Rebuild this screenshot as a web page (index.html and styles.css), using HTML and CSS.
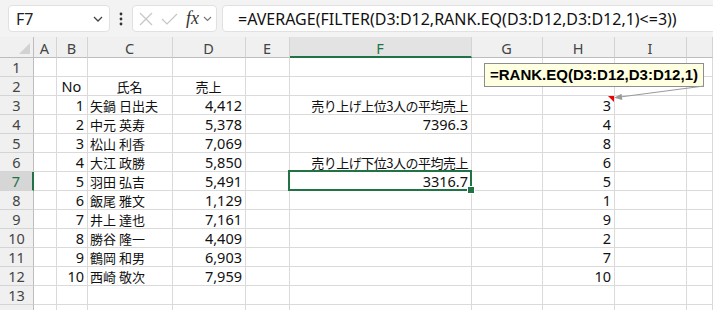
FILE: index.html
```html
<!DOCTYPE html>
<html lang="ja">
<head>
<meta charset="utf-8">
<title>Excel</title>
<link rel="stylesheet" href="styles.css">
</head>
<body>
<div class="app">
  <div class="fbar">
    <div class="namebox">
      <span class="nb-text">F7</span>
      <svg class="nb-chev" width="10" height="6" viewBox="0 0 10 6"><path d="M1 1 L5 5 L9 1" fill="none" stroke="#444" stroke-width="1.3"/></svg>
    </div>
    <div class="dots">
      <svg width="4" height="14" viewBox="0 0 4 14"><circle cx="2" cy="2" r="1.4" fill="#333"/><circle cx="2" cy="7" r="1.4" fill="#333"/><circle cx="2" cy="12" r="1.4" fill="#333"/></svg>
    </div>
    <div class="iconbox">
      <svg class="ico-x" width="14" height="14" viewBox="0 0 14 14"><path d="M1 1 L13 13 M13 1 L1 13" stroke="#c6c6c6" stroke-width="1.2" fill="none"/></svg>
      <svg class="ico-ok" width="17" height="12" viewBox="0 0 17 12"><path d="M1 6 L6 11 L16 1" stroke="#c6c6c6" stroke-width="1.2" fill="none"/></svg>
      <span class="fx">fx</span>
      <svg class="ico-chev" width="9" height="6" viewBox="0 0 9 6"><path d="M1 1 L4.5 4.5 L8 1" fill="none" stroke="#777" stroke-width="1.1"/></svg>
    </div>
    <div class="formula">=AVERAGE(FILTER(D3:D12,RANK.EQ(D3:D12,D3:D12,1)&lt;=3))</div>
  </div>

  <div class="sheet">
    <!-- header -->
    <div class="c corner"><svg width="11" height="11" viewBox="0 0 11 11"><path d="M11 0 L11 11 L0 11 Z" fill="#d2d2d2"/></svg></div>
    <div class="c ch">A</div><div class="c ch">B</div><div class="c ch">C</div><div class="c ch">D</div><div class="c ch">E</div><div class="c ch chsel">F</div><div class="c ch">G</div><div class="c ch">H</div><div class="c ch">I</div><div class="c ch"></div>

    <!-- row 1 -->
    <div class="c rh">1</div><div class="c"></div><div class="c"></div><div class="c"></div><div class="c"></div><div class="c"></div><div class="c"></div><div class="c"></div><div class="c"></div><div class="c"></div><div class="c"></div>
    <!-- row 2 -->
    <div class="c rh">2</div><div class="c"></div><div class="c ctr">No</div><div class="c ctr"><span class="jp">氏名</span></div><div class="c ctr"><span class="jp">売上</span></div><div class="c"></div><div class="c"></div><div class="c"></div><div class="c"></div><div class="c"></div><div class="c"></div>
    <!-- row 3 -->
    <div class="c rh">3</div><div class="c"></div><div class="c r">1</div><div class="c"><span class="jp">矢鍋 日出夫</span></div><div class="c r">4,412</div><div class="c"></div><div class="c r"><span class="jp lbl">売り上げ上位3人の平均売上</span></div><div class="c"></div><div class="c r note">3</div><div class="c"></div><div class="c"></div>
    <!-- row 4 -->
    <div class="c rh">4</div><div class="c"></div><div class="c r">2</div><div class="c"><span class="jp">中元 英寿</span></div><div class="c r">5,378</div><div class="c"></div><div class="c r">7396.3</div><div class="c"></div><div class="c r">4</div><div class="c"></div><div class="c"></div>
    <!-- row 5 -->
    <div class="c rh">5</div><div class="c"></div><div class="c r">3</div><div class="c"><span class="jp">松山 利香</span></div><div class="c r">7,069</div><div class="c"></div><div class="c"></div><div class="c"></div><div class="c r">8</div><div class="c"></div><div class="c"></div>
    <!-- row 6 -->
    <div class="c rh">6</div><div class="c"></div><div class="c r">4</div><div class="c"><span class="jp">大江 政勝</span></div><div class="c r">5,850</div><div class="c"></div><div class="c r"><span class="jp lbl">売り上げ下位3人の平均売上</span></div><div class="c"></div><div class="c r">6</div><div class="c"></div><div class="c"></div>
    <!-- row 7 -->
    <div class="c rh rhsel">7</div><div class="c"></div><div class="c r">5</div><div class="c"><span class="jp">羽田 弘吉</span></div><div class="c r">5,491</div><div class="c"></div><div class="c r sel">3316.7</div><div class="c"></div><div class="c r">5</div><div class="c"></div><div class="c"></div>
    <!-- row 8 -->
    <div class="c rh">8</div><div class="c"></div><div class="c r">6</div><div class="c"><span class="jp">飯尾 雅文</span></div><div class="c r">1,129</div><div class="c"></div><div class="c"></div><div class="c"></div><div class="c r">1</div><div class="c"></div><div class="c"></div>
    <!-- row 9 -->
    <div class="c rh">9</div><div class="c"></div><div class="c r">7</div><div class="c"><span class="jp">井上 達也</span></div><div class="c r">7,161</div><div class="c"></div><div class="c"></div><div class="c"></div><div class="c r">9</div><div class="c"></div><div class="c"></div>
    <!-- row 10 -->
    <div class="c rh">10</div><div class="c"></div><div class="c r">8</div><div class="c"><span class="jp">勝谷 隆一</span></div><div class="c r">4,409</div><div class="c"></div><div class="c"></div><div class="c"></div><div class="c r">2</div><div class="c"></div><div class="c"></div>
    <!-- row 11 -->
    <div class="c rh">11</div><div class="c"></div><div class="c r">9</div><div class="c"><span class="jp">鶴岡 和男</span></div><div class="c r">6,903</div><div class="c"></div><div class="c"></div><div class="c"></div><div class="c r">7</div><div class="c"></div><div class="c"></div>
    <!-- row 12 -->
    <div class="c rh">12</div><div class="c"></div><div class="c r">10</div><div class="c"><span class="jp">西崎 敬次</span></div><div class="c r">7,959</div><div class="c"></div><div class="c"></div><div class="c"></div><div class="c r">10</div><div class="c"></div><div class="c"></div>
    <!-- row 13 -->
    <div class="c rh">13</div><div class="c"></div><div class="c"></div><div class="c"></div><div class="c"></div><div class="c"></div><div class="c"></div><div class="c"></div><div class="c"></div><div class="c"></div><div class="c"></div>
    <!-- row 14 (partially visible) -->
    <div class="c rh"></div><div class="c"></div><div class="c"></div><div class="c"></div><div class="c"></div><div class="c"></div><div class="c"></div><div class="c"></div><div class="c"></div><div class="c"></div><div class="c"></div>
  </div>

  <div class="comment">=RANK.EQ(D3:D12,D3:D12,1)</div>
  <svg class="arrow" width="713" height="310" viewBox="0 0 713 310">
    <line x1="704" y1="86" x2="620" y2="97" stroke="#9a9a9a" stroke-width="1"/>
    <polygon points="614,97.8 622.3,100 621.5,93.8" fill="#9a9a9a"/>
  </svg>
</div>
</body>
</html>
```

FILE: styles.css
```css
* { box-sizing: border-box; }
html, body { margin: 0; padding: 0; background: #fff; overflow: hidden; }
body { font-family: "Noto Sans", "Noto Sans CJK JP", sans-serif; color: #111; }

.app { position: relative; width: 713px; height: 310px; overflow: hidden; }

/* formula bar */
.fbar {
  height: 37px;
  background: #f3f3f3;
  display: flex;
  align-items: flex-start;
  padding-top: 5px;
}
.namebox {
  margin-left: 8px;
  width: 102px;
  height: 27px;
  background: #fff;
  border: 1px solid #e1e1e1;
  border-radius: 4px;
  display: flex;
  align-items: center;
  justify-content: space-between;
  padding: 0 6px 0 7px;
}
.nb-text { font-size: 16px; color: #222; line-height: 1; }
.dots { width: 22px; height: 27px; display: flex; align-items: center; justify-content: center; }
.iconbox {
  width: 85px;
  height: 27px;
  background: #fff;
  border: 1px solid #e1e1e1;
  border-radius: 4px;
  display: flex;
  align-items: center;
  padding-left: 6px;
}
.ico-x { margin-right: 8px; }
.ico-ok { margin-right: 8px; }
.fx {
  font-family: "Liberation Serif", "DejaVu Serif", serif;
  font-style: italic;
  font-size: 18px;
  color: #333;
  line-height: 1;
  margin-right: 4px;
  margin-top: -2px;
}
.formula {
  margin-left: 5px;
  flex: 1;
  height: 27px;
  margin-right: -20px;
  background: #fff;
  border: 1px solid #e1e1e1;
  border-radius: 4px;
  padding-left: 15px;
  font-size: 16px;
  line-height: 27px;
  color: #111;
  white-space: nowrap;
}

/* sheet */
.sheet {
  display: grid;
  grid-template-columns: 34px 23px 31px 85px 73px 44px 182px 71px 72px 72px 1fr;
  grid-template-rows: 21px;
  grid-auto-rows: 19px;
}
.c {
  border-right: 1px solid #dadada;
  border-bottom: 1px solid #dadada;
  padding: 0 3px 0 2px;
  font-size: 14.5px;
  line-height: 18px;
  white-space: nowrap;
  color: #111;
}
.r { text-align: right; }
.ctr { text-align: center; }
.jp { font-family: "Noto Sans CJK JP", sans-serif; font-size: 13px; }
.lbl { letter-spacing: -0.5px; }

.corner {
  background: #f0f0f0;
  border-right-color: #bdbdbd;
  border-bottom-color: #bdbdbd;
  display: flex;
  align-items: flex-end;
  justify-content: flex-end;
  padding: 0 3px 3px 0;
}
.ch {
  background: #f0f0f0;
  border-right-color: #d4d4d4;
  border-bottom-color: #bdbdbd;
  text-align: center;
  color: #444;
  line-height: 20px;
  padding-top: 1px;
}
.chsel {
  background: #e3e3e3;
  color: #217346;
  border-bottom: 2px solid #217346;
}
.rh {
  background: #f0f0f0;
  border-right-color: #bdbdbd;
  border-bottom-color: #d4d4d4;
  text-align: center;
  color: #444;
  padding: 0;
}
.rhsel {
  background: #d6d6d6;
  color: #217346;
  border-right: 2px solid #217346;
}

.sel { position: relative; }
.sel::after {
  content: "";
  position: absolute;
  left: -2px; top: -2px; right: -1px; bottom: -1px;
  border: 2px solid #217346;
}
.sel::before {
  content: "";
  position: absolute;
  right: -4px; bottom: -4px;
  width: 6px; height: 6px;
  background: #217346;
  border: 1px solid #fff;
  z-index: 2;
}

.note { position: relative; }
.note::after {
  content: "";
  position: absolute;
  top: 0; right: 0;
  border-top: 6px solid #e00;
  border-left: 6px solid transparent;
}

/* comment tooltip */
.comment {
  position: absolute;
  left: 484px;
  top: 63px;
  width: 220px;
  height: 24px;
  background: #ffffe1;
  border: 1px solid #8e8e8e;
  font-family: "Liberation Sans", Arial, sans-serif;
  font-weight: bold;
  font-size: 15px;
  line-height: 22px;
  padding-left: 5px;
  color: #000;
  white-space: nowrap;
}
.arrow { position: absolute; left: 0; top: 0; pointer-events: none; }
```
